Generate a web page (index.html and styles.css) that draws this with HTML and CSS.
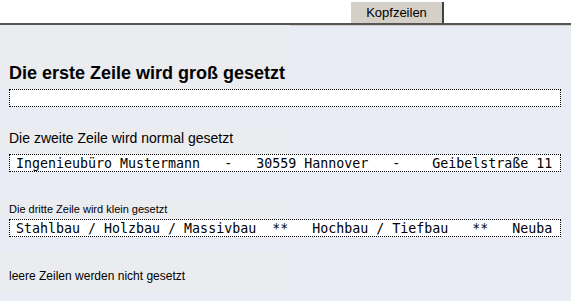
FILE: index.html
```html
<!DOCTYPE html>
<html lang="de">
<head>
    <meta charset="UTF-8">
    <title>Kopfzeilen</title>
    <link rel="stylesheet" href="styles.css">
</head>
<body>
    <div class="tabbar">
        <div class="tab">Kopfzeilen</div>
    </div>
    <div class="panel">
        <div class="label big">Die erste Zeile wird groß gesetzt</div>
        <input type="text" class="line" readonly value="">

        <div class="label normal">Die zweite Zeile wird normal gesetzt</div>
        <input type="text" class="line" readonly value="Ingenieubüro Mustermann   -   30559 Hannover   -    Geibelstraße 11">

        <div class="label small">Die dritte Zeile wird klein gesetzt</div>
        <input type="text" class="line" readonly value="Stahlbau / Holzbau / Massivbau  **   Hochbau / Tiefbau   **   Neubau / Umbau / Sanierung">

        <div class="label note">leere Zeilen werden nicht gesetzt</div>
    </div>
</body>
</html>
```

FILE: styles.css
```css
html, body {
    margin: 0;
    background-color: #e9ecf5;
    font-family: "Liberation Sans", Arial, sans-serif;
}

.tabbar {
    background-color: #fff;
    height: 23px;
    display: flex;
    justify-content: flex-end;
    align-items: flex-end;
    padding-right: 127px;
    border-bottom: 2px solid #555;
    box-shadow: 0 1px 0 #d4d0c8;
}

.tab {
    width: 91px;
    height: 21px;
    line-height: 21px;
    background-color: #d4d0c8;
    border-right: 2px solid #404040;
    font-size: 13px;
    color: #000;
    text-align: center;
}

.panel {
    padding: 0;
}

.label {
    width: 290px;
    background-color: #ebecf0;
    color: #000;
    padding-left: 9px;
    box-sizing: border-box;
}

.big {
    font-size: 18px;
    font-weight: bold;
    padding-top: 38px;
    padding-bottom: 5px;
}

.normal {
    font-size: 14px;
    margin-top: 20px;
    padding-top: 3px;
    padding-bottom: 8px;
}

.small {
    font-size: 11px;
    margin-top: 27px;
    padding-top: 4px;
    padding-bottom: 4px;
}

.note {
    font-size: 12px;
    margin-top: 14px;
    padding-top: 18px;
    padding-bottom: 8px;
}

.line {
    display: block;
    margin: 0 0 0 9px;
    width: 552px;
    height: 18px;
    box-sizing: border-box;
    padding: 0 8px 0 6px;
    border: 1px dotted #000;
    background-color: #fff;
    font-family: "DejaVu Sans Mono", "Liberation Mono", monospace;
    font-size: 13.3px;
    color: #000;
    white-space: pre;
    outline: none;
}
```
